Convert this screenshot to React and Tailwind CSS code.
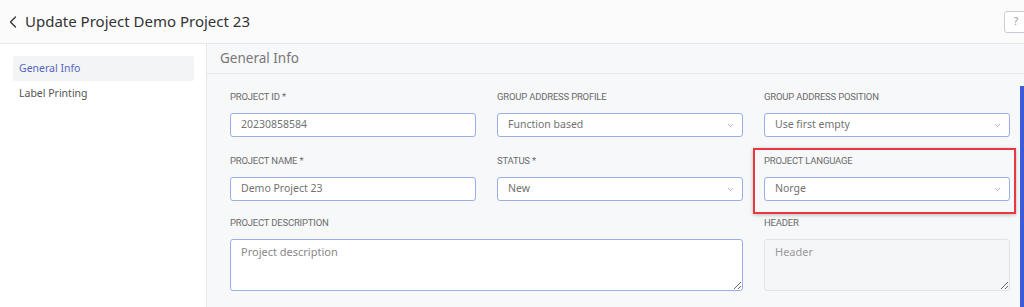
import { ChevronLeft, ChevronDown } from "lucide-react";

const labelCls =
  "h-[16px] leading-[16px] text-[9.5px] uppercase text-[#6b6b6b] font-['Roboto',sans-serif] tracking-[-0.2px]";

function Label({ children }) {
  return <div className={labelCls}>{children}</div>;
}

function TextInput({ value }) {
  return (
    <div className="h-[24px] mt-[8px] rounded-[3px] border border-[#9aaeea] bg-white px-[10px] flex items-center text-[10.5px] text-[#727272]">
      {value}
    </div>
  );
}

function Select({ value }) {
  return (
    <div className="h-[24px] mt-[8px] rounded-[3px] border border-[#9aaeea] bg-white pl-[10px] pr-[7px] flex items-center justify-between text-[10.5px] text-[#727272]">
      <span>{value}</span>
      <ChevronDown size={9} strokeWidth={2} className="text-[#999]" />
    </div>
  );
}

function Area({ placeholder, muted }) {
  return (
    <textarea
      placeholder={placeholder}
      className={`block w-full h-[52px] mt-[8px] rounded-[3px] border px-[10px] py-[4px] text-[11px] outline-none ${
        muted
          ? "border-[#e0e3e8] bg-[#f5f6f8] placeholder:text-[#999]"
          : "border-[#9aaeea] bg-white placeholder:text-[#888]"
      }`}
    />
  );
}

export default function App() {
  return (
    <div className="w-[1024px] h-[307px] overflow-hidden bg-white font-['Noto_Sans',sans-serif] flex flex-col">
      {/* Header */}
      <div className="h-[44px] shrink-0 flex items-center justify-between border-b border-[#e6e8ec] bg-[#fbfbfc] pl-[3px]">
        <div className="flex items-center gap-[2px]">
          <ChevronLeft size={20} strokeWidth={1.6} className="text-[#333]" />
          <span className="text-[15px] text-[#333]">Update Project Demo Project 23</span>
        </div>
        <div className="w-[24px] h-[22px] mr-[-4px] rounded-[3px] border border-[#c9cdd4] bg-white flex items-center justify-center text-[10px] text-[#999]">
          ?
        </div>
      </div>

      <div className="flex flex-1 min-h-0">
        {/* Sidebar */}
        <div className="w-[207px] shrink-0 border-r border-[#e6e8ec] bg-white pt-[12px] px-[13px]">
          <div className="h-[25px] w-[181px] rounded-[2px] bg-[#f3f4f6] pl-[6px] flex items-center text-[10.5px] text-[#5566c0]">
            General Info
          </div>
          <div className="h-[25px] pl-[6px] flex items-center text-[10.5px] text-[#555]">Label Printing</div>
        </div>

        {/* Main */}
        <div className="flex-1 bg-[#f7f8fa] flex flex-col relative">
          <div className="h-[30px] shrink-0 border-b border-[#e6e8ec] pl-[13px] flex items-center text-[13.5px] text-[#777]">
            General Info
          </div>
          <div className="flex flex-1">
            <div className="flex-1 pl-[23px] pt-[15px]">
              <div className="grid grid-cols-[246px_246px_246px] gap-x-[21px]">
                <div>
                  <Label>Project ID *</Label>
                  <TextInput value="20230858584" />
                </div>
                <div>
                  <Label>Group address profile</Label>
                  <Select value="Function based" />
                </div>
                <div>
                  <Label>Group address position</Label>
                  <Select value="Use first empty" />
                </div>

                <div className="mt-[16px]">
                  <Label>Project name *</Label>
                  <TextInput value="Demo Project 23" />
                </div>
                <div className="mt-[16px]">
                  <Label>Status *</Label>
                  <Select value="New" />
                </div>
                <div className="mt-[16px] relative">
                  <Label>Project language</Label>
                  <Select value="Norge" />
                  <div className="absolute left-[-11px] right-[-6px] top-[-5px] bottom-[-13px] border-2 border-[#e8383d] shadow-[0_1px_4px_rgba(0,0,0,0.25)] pointer-events-none" />
                </div>

                <div className="col-span-2 mt-[14px]">
                  <Label>Project description</Label>
                  <Area placeholder="Project description" />
                </div>
                <div className="mt-[14px]">
                  <Label>Header</Label>
                  <Area placeholder="Header" muted />
                </div>
              </div>
            </div>
            <div className="w-[4px] shrink-0 mt-[12px] bg-[#3b5bdb]" />
          </div>
        </div>
      </div>
    </div>
  );
}
